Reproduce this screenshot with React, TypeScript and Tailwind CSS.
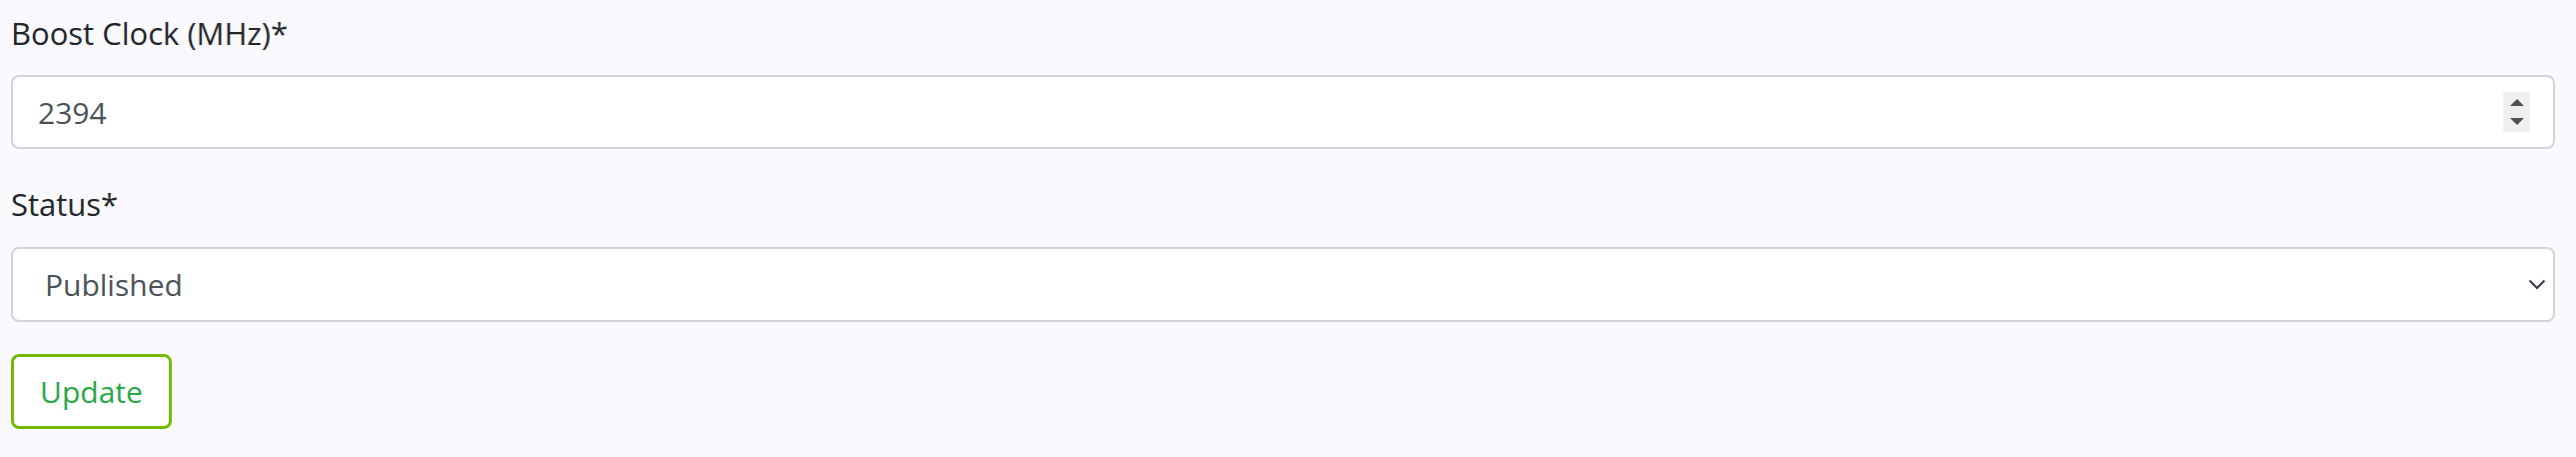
import { useState } from 'react';

const font = { fontFamily: '"Open Sans", "Noto Sans", sans-serif' };

export default function App() {
  const [clock, setClock] = useState('2394');
  const [status, setStatus] = useState('published');

  return (
    <div className="min-h-[457px] bg-[#f9f9fe] pl-[11px] pr-[21px] pt-[11px]" style={font}>
      {/* Boost clock */}
      <div className="mb-[33px]">
        <label className="mb-[19px] block text-[31px] leading-[45px] text-[#212529]">
          Boost Clock (MHz)*
        </label>
        <div className="relative">
          <input
            type="text"
            value={clock}
            onChange={(e) => setClock(e.target.value)}
            className="block h-[74px] w-full rounded-[8px] border-2 border-[#ced4da] bg-white pl-[25px] text-[30px] text-[#495057] outline-none"
            style={font}
          />
          <div className="absolute right-[25px] top-[17px] flex h-[40px] w-[27px] flex-col items-center justify-center gap-[12px] bg-[#f0f0f0]">
            <svg width="14" height="7" viewBox="0 0 14 7">
              <path d="M7 0 L14 7 L0 7 Z" fill="#505050" />
            </svg>
            <svg width="14" height="7" viewBox="0 0 14 7">
              <path d="M0 0 L14 0 L7 7 Z" fill="#505050" />
            </svg>
          </div>
        </div>
      </div>

      {/* Status */}
      <div className="mb-[32px]">
        <label className="mb-[20px] block text-[31px] leading-[45px] text-[#212529]">
          Status*
        </label>
        <div className="relative">
          <select
            value={status}
            onChange={(e) => setStatus(e.target.value)}
            className="block h-[75px] w-full appearance-none rounded-[8px] border-2 border-[#ced4da] bg-white pl-[32px] text-[30px] text-[#495057] outline-none"
            style={font}
          >
            <option value="published">Published</option>
            <option value="draft">Draft</option>
          </select>
          <svg
            className="pointer-events-none absolute right-[9px] top-[32px]"
            width="18"
            height="11"
            viewBox="0 0 18 11"
          >
            <path d="M1.5 1.5 L9 9 L16.5 1.5" fill="none" stroke="#343a40" strokeWidth="2" />
          </svg>
        </div>
      </div>

      <button
        className="h-[75px] w-[161px] rounded-[8px] border-[3px] border-[#76b900] bg-white text-[30px] text-[#28a745]"
        style={font}
      >
        Update
      </button>
    </div>
  );
}
